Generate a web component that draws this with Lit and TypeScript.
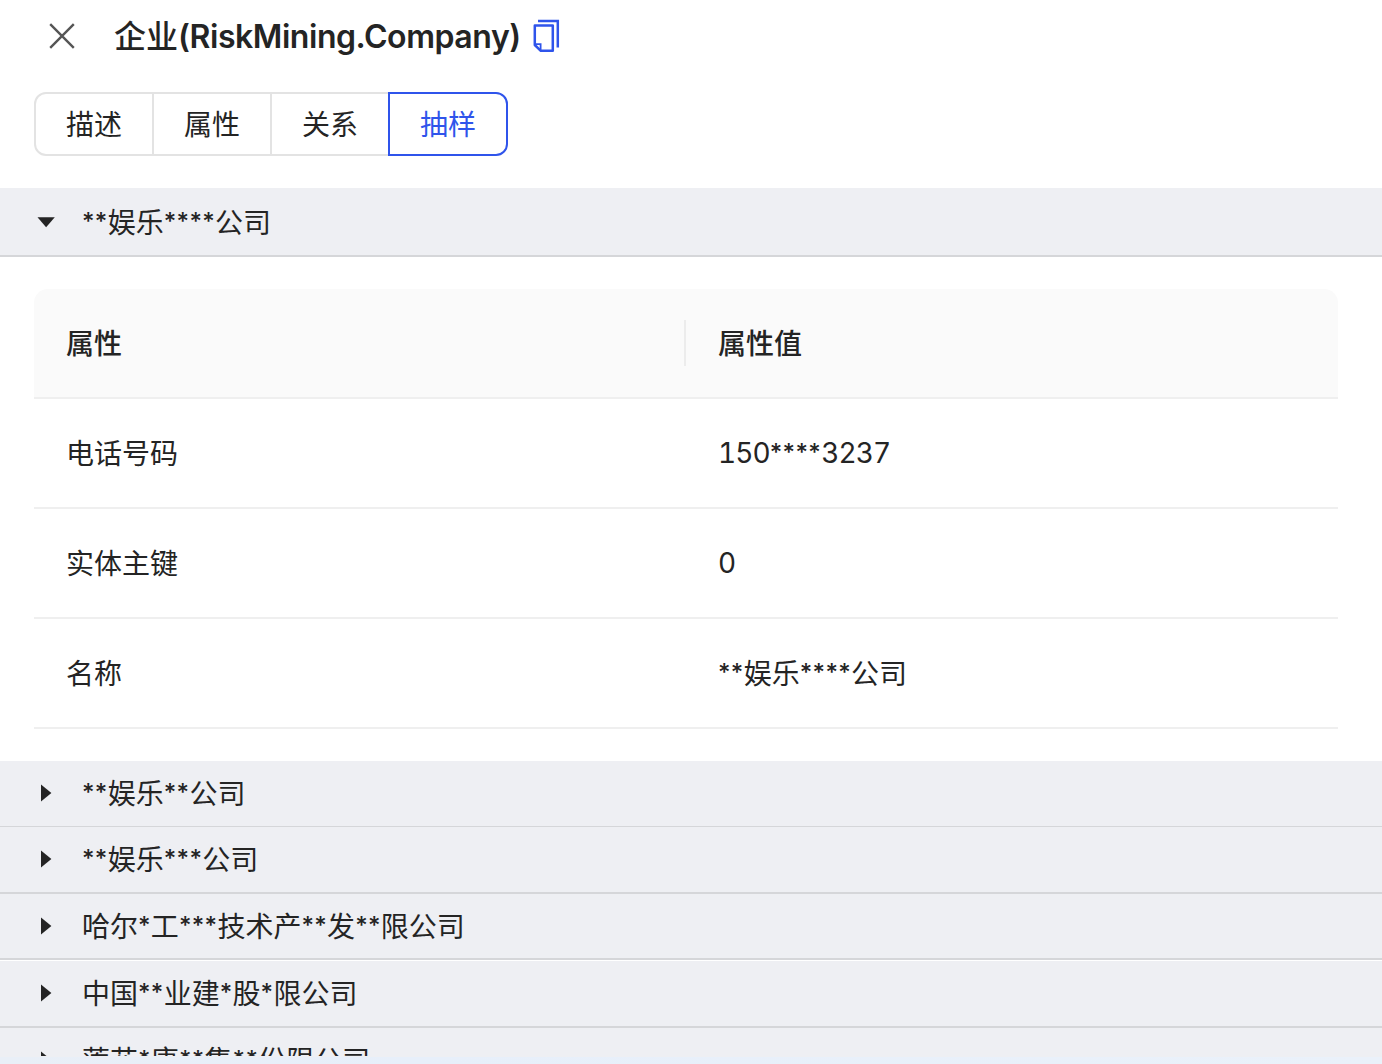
import { LitElement, html, css } from "lit";
import { customElement, state } from "lit/decorators.js";
import { classMap } from "lit/directives/class-map.js";

interface Sample {
  name: string;
  size: string;
  props?: [string, string][];
}

const TABS = ["描述", "属性", "关系", "抽样"];

const SAMPLES: Sample[] = [
  {
    name: "**娱乐****公司",
    size: "first",
    props: [
      ["电话号码", "150****3237"],
      ["实体主键", "0"],
      ["名称", "**娱乐****公司"],
    ],
  },
  { name: "**娱乐**公司", size: "thin" },
  { name: "**娱乐***公司", size: "tall" },
  { name: "哈尔*工***技术产**发**限公司", size: "gap" },
  { name: "中国**业建*股*限公司", size: "tall" },
  { name: "莲花*康**集**份限公司", size: "cut" },
];

/** Sets runs of masking asterisks smaller, and digits in tabular figures. */
const masked = (text: string) =>
  text
    .split(/(\*+|\d+)/)
    .filter(Boolean)
    .map((part) => {
      if (part[0] === "*") return html`<span class="mask">${part}</span>`;
      if (/\d/.test(part)) return html`<span class="digits">${part}</span>`;
      return part;
    });

@customElement("app-root")
export class AppRoot extends LitElement {
  static styles = css`
    :host {
      display: flex;
      flex-direction: column;
      width: 1382px;
      height: 1064px;
      overflow: hidden;
      background: #fff;
      color: #242424;
      font-family: Inter, "Noto Sans CJK SC", sans-serif;
      font-size: 28px;
      line-height: 44px;
    }
    * {
      box-sizing: border-box;
    }
    .mask {
      font-size: 24px;
      font-weight: 500;
      letter-spacing: 0.35px;
      vertical-align: 3px;
      line-height: 1;
    }
    .digits {
      font-variant-numeric: tabular-nums;
      letter-spacing: -0.9px;
      vertical-align: 1px;
      line-height: 1;
    }
    .header {
      display: flex;
      align-items: center;
      height: 72px;
      flex: none;
      padding-left: 49px;
    }
    .close {
      width: 26px;
      height: 26px;
      flex: none;
    }
    .title {
      margin: 0 0 0 39px;
      padding-top: 2px;
      width: 407px;
      white-space: nowrap;
      font-size: 32px;
      font-weight: 500;
      line-height: 48px;
    }
    .latin {
      font-weight: 600;
      letter-spacing: -0.44px;
    }
    .copy {
      width: 28px;
      height: 34px;
      margin-left: 11px;
      flex: none;
    }
    .tabs {
      display: flex;
      flex: none;
      height: 64px;
      margin: 20px 0 32px 34px;
    }
    .tab {
      width: 120px;
      margin-left: -2px;
      border: 2px solid #e3e3e3;
      display: flex;
      align-items: center;
      justify-content: center;
      padding: 2px 0 0;
      background: #fff;
      font: inherit;
      color: inherit;
    }
    .tab:first-child {
      margin-left: 0;
      border-radius: 12px 0 0 12px;
    }
    .tab:last-child {
      border-radius: 0 12px 12px 0;
    }
    .tab.active {
      color: #2f54eb;
      border-color: #2f54eb;
      z-index: 1;
    }
    .list {
      display: flex;
      flex-direction: column;
      flex: none;
      height: 868px;
      overflow: hidden;
    }
    .row {
      display: flex;
      align-items: center;
      flex: none;
      background: #eeeff3;
      border-bottom: 2px solid #d5d6d9;
      height: 67px;
      padding-left: 36px;
    }
    .row.first {
      height: 69px;
    }
    .row.thin {
      height: 66px;
      border-bottom-width: 1px;
    }
    .row.gap {
      height: 66px;
      margin-bottom: 1px;
    }
    .first .name,
    .gap .name {
      padding-top: 2px;
    }
    .caret {
      width: 20px;
      height: 20px;
      margin-right: 26px;
      flex: none;
      fill: #242424;
    }
    .thin .caret,
    .tall .caret,
    .cut .caret {
      margin-bottom: 1px;
    }
    .panel {
      flex: none;
      padding: 32px 44px 32px 34px;
      height: 504px;
    }
    .line {
      display: grid;
      grid-template-columns: 652px 652px;
      align-items: center;
      height: 110px;
      border-bottom: 2px solid #efefef;
    }
    .line.head {
      background: #fafafa;
      border-radius: 14px 14px 0 0;
      font-weight: 500;
    }
    .cell {
      padding: 2px 0 0 32px;
      white-space: nowrap;
    }
    .head .cell:first-child {
      border-right: 2px solid #ececec;
    }
    .band {
      flex: none;
      height: 8px;
      border-top: 1px solid #eeeff3;
      background: linear-gradient(90deg, #e9eff7, #e7effa 30%, #eaf1fa);
    }
  `;

  @state() private active = 3;
  @state() private open = 0;

  private renderPanel(props: [string, string][]) {
    return html`<div class="panel">
      <div class="line head">
        <div class="cell">属性</div>
        <div class="cell">属性值</div>
      </div>
      ${props.map(
        ([key, value]) => html`<div class="line">
          <div class="cell">${key}</div>
          <div class="cell">${masked(value)}</div>
        </div>`
      )}
    </div>`;
  }

  private renderSample(s: Sample, i: number) {
    const open = this.open === i;
    return html`<div
        class=${classMap({ row: true, [s.size]: true })}
        @click=${() => (this.open = open ? -1 : i)}
      >
        <svg class="caret" viewBox="0 0 20 20">
          <path d=${open ? "M1.5 5.2H18.8L10.1 15.2Z" : "M5 1.5V18.5L15.4 10Z"} />
        </svg>
        <div class="name">${masked(s.name)}</div>
      </div>
      ${open && s.props ? this.renderPanel(s.props) : ""}`;
  }

  render() {
    return html`
      <div class="header">
        <svg class="close" viewBox="0 0 26 26" fill="none" stroke="#555" stroke-width="2.4">
          <path d="M1.2 1.2L24.8 24.8M24.8 1.2L1.2 24.8" />
        </svg>
        <h1 class="title">企业<span class="latin">(RiskMining.Company)</span></h1>
        <svg class="copy" viewBox="0 0 28 34" fill="none" stroke="#2f54eb" stroke-width="2.5">
          <path d="M6 2H25.8V28.5" />
          <path d="M2.8 6.6H20.8V31.8H8.8L2.8 26Z" stroke-linejoin="round" />
          <path d="M3 25.2H8.6V31.5" stroke-width="1.8" />
        </svg>
      </div>
      <div class="tabs">
        ${TABS.map(
          (t, i) => html`<button
            class=${classMap({ tab: true, active: i === this.active })}
            @click=${() => (this.active = i)}
          >${t}</button>`
        )}
      </div>
      <div class="list">${SAMPLES.map((s, i) => this.renderSample(s, i))}</div>
      <div class="band"></div>
    `;
  }
}
